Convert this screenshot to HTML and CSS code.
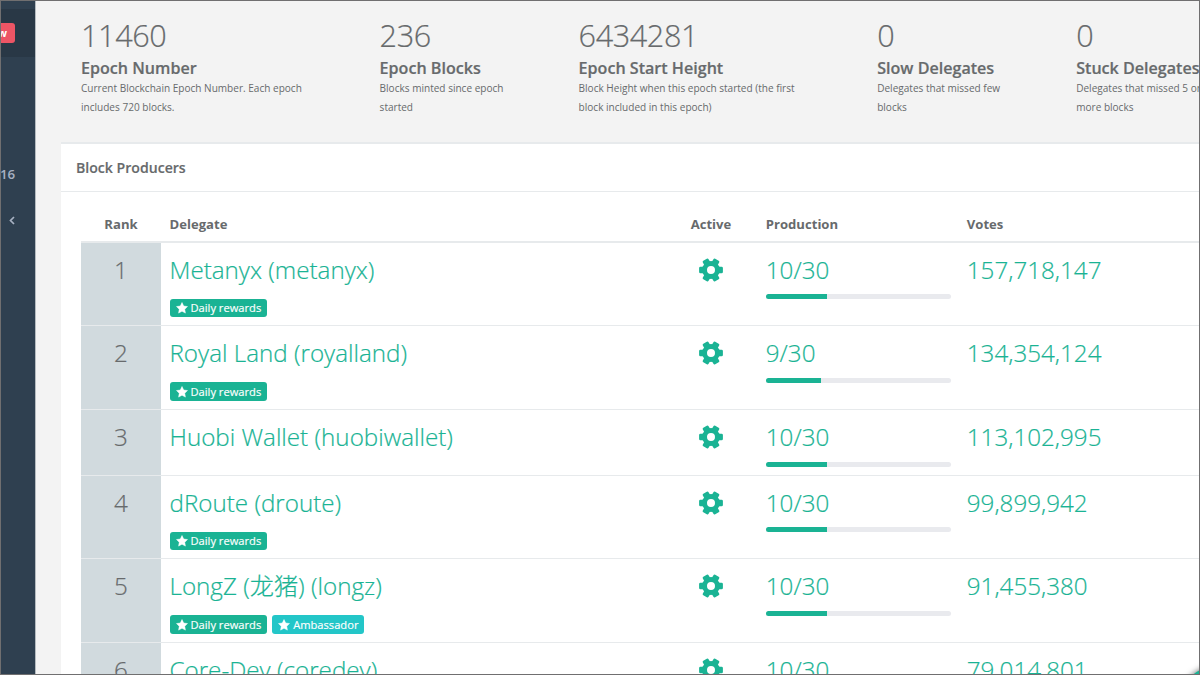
FILE: index.html
```html
<!DOCTYPE html>
<html lang="en">
<head>
<meta charset="utf-8">
<title>Block Producers</title>
<link rel="stylesheet" href="styles.css">
</head>
<body>
<svg class="defs" width="0" height="0">
  <symbol id="star" viewBox="0 0 24 24"><path d="M12 1l3.400 7 7.600 1.100-5.500 5.400 1.300 7.700-6.800-3.700-6.800 3.700 1.300-7.700L1 9.100 8.600 8z" stroke="currentColor" stroke-width="1" stroke-linejoin="round"/></symbol>
  <symbol id="gear" viewBox="-12 -12 24 24">
    <circle r="6.500" fill="none" stroke="#1ab394" stroke-width="5"/>
    <rect x="6.500" y="-3.300" width="5.400" height="6.600" rx="1.300"/>
    <rect x="6.500" y="-3.300" width="5.400" height="6.600" rx="1.300" transform="rotate(60)"/>
    <rect x="6.500" y="-3.300" width="5.400" height="6.600" rx="1.300" transform="rotate(120)"/>
    <rect x="6.500" y="-3.300" width="5.400" height="6.600" rx="1.300" transform="rotate(180)"/>
    <rect x="6.500" y="-3.300" width="5.400" height="6.600" rx="1.300" transform="rotate(240)"/>
    <rect x="6.500" y="-3.300" width="5.400" height="6.600" rx="1.300" transform="rotate(300)"/>
  </symbol>
</svg>
<div class="app">
  <aside class="sidebar">
    <div class="nav-active"><span class="new-label">new</span></div>
    <div class="nav-count">16</div>
    <svg class="chevron" viewBox="0 0 6 9"><path d="M5 1L1.500 4.500 5 8"/></svg>
  </aside>
  <main class="content">
    <section class="stats">
      <div class="stat wide"><div class="num">11460</div><h2>Epoch Number</h2><p>Current Blockchain Epoch Number. Each epoch<br>includes 720 blocks.</p></div>
      <div class="stat"><div class="num">236</div><h2>Epoch Blocks</h2><p>Blocks minted since epoch<br>started</p></div>
      <div class="stat wide"><div class="num">6434281</div><h2>Epoch Start Height</h2><p>Block Height when this epoch started (the first<br>block included in this epoch)</p></div>
      <div class="stat"><div class="num">0</div><h2>Slow Delegates</h2><p>Delegates that missed few<br>blocks</p></div>
      <div class="stat"><div class="num">0</div><h2>Stuck Delegates</h2><p>Delegates that missed 5 or<br>more blocks</p></div>
    </section>
    <section class="panel">
      <h3>Block Producers</h3>
      <div class="table">
        <div class="row head"><span class="rank">Rank</span><span>Delegate</span><span class="active">Active</span><span>Production</span><span>Votes</span></div>
        <div class="row"><div class="rank">1</div><div class="name"><a>Metanyx (metanyx)</a><div class="tags"><span class="tag"><svg><use href="#star"/></svg>Daily rewards</span></div></div><div class="active"><svg><use href="#gear"/></svg></div><div class="production">10/30<div class="bar"><i style="width:33.33%"></i></div></div><div class="votes">157,718,147</div></div>
        <div class="row"><div class="rank">2</div><div class="name"><a>Royal Land (royalland)</a><div class="tags"><span class="tag"><svg><use href="#star"/></svg>Daily rewards</span></div></div><div class="active"><svg><use href="#gear"/></svg></div><div class="production">9/30<div class="bar"><i style="width:30%"></i></div></div><div class="votes">134,354,124</div></div>
        <div class="row short"><div class="rank">3</div><div class="name"><a>Huobi Wallet (huobiwallet)</a></div><div class="active"><svg><use href="#gear"/></svg></div><div class="production">10/30<div class="bar"><i style="width:33.33%"></i></div></div><div class="votes">113,102,995</div></div>
        <div class="row"><div class="rank">4</div><div class="name"><a>dRoute (droute)</a><div class="tags"><span class="tag"><svg><use href="#star"/></svg>Daily rewards</span></div></div><div class="active"><svg><use href="#gear"/></svg></div><div class="production">10/30<div class="bar"><i style="width:33.33%"></i></div></div><div class="votes">99,899,942</div></div>
        <div class="row"><div class="rank">5</div><div class="name"><a>LongZ (<span class="cjk">龙猪</span>) (longz)</a><div class="tags"><span class="tag"><svg><use href="#star"/></svg>Daily rewards</span><span class="tag info"><svg><use href="#star"/></svg>Ambassador</span></div></div><div class="active"><svg><use href="#gear"/></svg></div><div class="production">10/30<div class="bar"><i style="width:33.33%"></i></div></div><div class="votes">91,455,380</div></div>
        <div class="row"><div class="rank">6</div><div class="name"><a>Core-Dev (coredev)</a></div><div class="active"><svg><use href="#gear"/></svg></div><div class="production">10/30<div class="bar"><i style="width:33.33%"></i></div></div><div class="votes">79,014,801</div></div>
      </div>
    </section>
  </main>
  <div class="chat-button"></div>
</div>
</body>
</html>
```
FILE: styles.css
```css
* { box-sizing: border-box; }
body { margin: 0; overflow: hidden; font-family: "Open Sans", "Noto Sans CJK SC", sans-serif; color: #676a6c; }
h2, h3, p { margin: 0; }
.defs { display: block; width: 0; height: 0; }
.app { position: relative; display: flex; width: 1200px; height: 675px; overflow: hidden; background: #f3f3f3; }
.app::after { content: ""; position: absolute; inset: 0; border: 1px solid #706f70; }
.sidebar { flex: none; width: 35px; height: 675px; background: #2f4050; box-shadow: 1px 0 #b5bbc0; color: #a7b1c2; font-weight: 600; }
.nav-active { height: 48px; margin-top: 8.500px; padding-top: 14.500px; background: #293846; }
.new-label { display: flex; align-items: center; justify-content: flex-end; width: 35px; height: 20px; margin-left: -20px; padding: 0 8px 0 0; border-radius: 3px; background: #ed5565; color: #fff; font-size: 10.500px; font-weight: 700; }
.nav-count { margin-top: 107.500px; font-size: 13.300px; line-height: 20px; }
.chevron { display: block; width: 6px; height: 9px; margin: 32px 0 0 9px; fill: none; stroke: #a7b1c2; stroke-width: 1.700; }
.content { flex: none; width: 1230px; padding-left: 26px; }
.stats { display: flex; height: 142px; padding: 15px 0 0 20px; }
.stat { flex: none; width: 199px; white-space: nowrap; }
.stat.wide { width: 298.600px; }
.num { font-size: 30.600px; font-weight: 300; line-height: 41px; letter-spacing: -.4px; -webkit-text-stroke: .2px currentColor; }
h2 { margin-top: 1px; font-size: 16.100px; font-weight: 600; line-height: 22px; -webkit-text-stroke: .2px currentColor; }
.stat p { font-size: 10.060px; line-height: 19px; }
.panel { height: 540px; background: #fff; border-top: 2px solid #e7eaec; }
h3 { height: 48px; padding-left: 15px; border-bottom: 1px solid #e7eaec; font-size: 14.100px; font-weight: 600; line-height: 48px; -webkit-text-stroke: .15px currentColor; }
.table { padding: 16px 20px 0; }
.row { display: grid; grid-template-columns: 80px 515px 82px 201px 1fr; height: 83.750px; border-bottom: 1px solid #e7eaec; font-size: 24.200px; font-weight: 300; line-height: 34px; color: #1ab394; white-space: nowrap; -webkit-text-stroke: .2px currentColor; }
.row > * { padding: 10px 7.800px 0; }
.row > .name { padding-left: 8.500px; }
.row.short { height: 65.500px; }
.row.head { height: 34.500px; border-bottom-width: 2px; font-size: 13.100px; font-weight: 700; line-height: 18px; color: #676a6c; -webkit-text-stroke: 0; }
.row.head > * { padding-top: 7px; }
.row.head > :nth-child(2) { padding-left: 8.500px; }
.rank { text-align: center; }
.row:not(.head) .rank { background: #d1dade; color: #676a6c; }
.row .active { padding-left: 0; padding-right: 0; margin: 0 0 0 -12px; text-align: center; }
.active svg { display: block; width: 24px; height: 24px; margin: 5px auto 0; fill: #1ab394; }
.name a { display: block; }
.cjk { font-family: "Noto Sans CJK SC", sans-serif; line-height: 1; }
.tags { display: flex; gap: 5px; margin-top: 12px; }
.tag { display: flex; align-items: center; height: 18.500px; padding: 0 6px; border-radius: 3px; background: #1ab394; color: #fff; font-size: 11.150px; font-weight: 500; line-height: 18px; -webkit-text-stroke: .15px currentColor; }
.tag.info { background: #23c6c8; }
.tag svg { width: 12px; height: 12px; margin-right: 3px; fill: #fff; color: #fff; }
.bar { width: 185px; height: 5px; margin-top: 7.500px; border-radius: 2.500px; background: #e9eaee; overflow: hidden; }
.bar i { display: block; height: 5px; background: #1ab394; }
.chat-button { position: absolute; left: 1183px; top: 667px; width: 60px; height: 60px; border-radius: 50%; background: #1ab394; box-shadow: 0 0 6px rgba(0,0,0,.6); }
```
